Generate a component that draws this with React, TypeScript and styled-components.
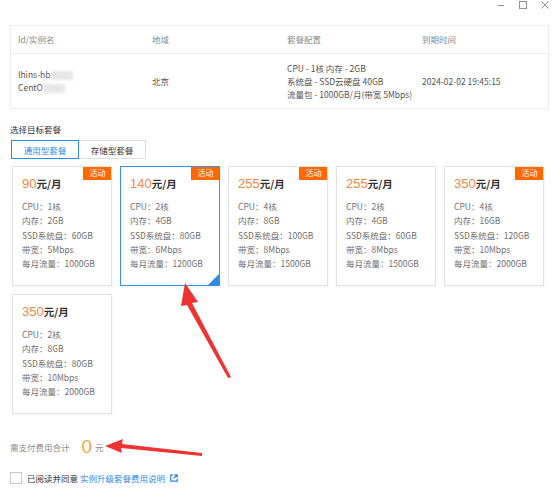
import React from "react";
import styled, { createGlobalStyle } from "styled-components";

const Global = createGlobalStyle`
  html, body { margin: 0; padding: 0; background: #fff; }
  body { font-family: "Noto Sans CJK SC", "Noto Sans", "Liberation Sans", sans-serif; color: #333; }
`;

const Page = styled.div`
  position: relative;
  width: 552px;
  height: 500px;
  overflow: hidden;
  padding: 0 3px 0 10px;
  box-sizing: border-box;
`;

const TopBar = styled.div`
  height: 25px;
  display: flex;
  justify-content: flex-end;
  align-items: flex-start;
  gap: 14px;
  margin-right: 0;
  padding-top: 1px;
  box-sizing: border-box;
`;

const WinIcon = styled.svg`
  display: block;
  stroke: #8f8f8f;
  stroke-width: 1;
  fill: none;
`;

const Table = styled.div`
  border: 1px solid #ececec;
  width: 539px;
  box-sizing: border-box;
`;

const Row = styled.div<{ $h: number; $head?: boolean }>`
  display: grid;
  grid-template-columns: 134px 135px 135px 1fr;
  height: ${(p) => p.$h}px;
  align-items: center;
  padding-left: 7px;
  font-size: 8.5px;
  line-height: 13px;
  color: ${(p) => (p.$head ? "#8a8a8a" : "#555")};
  border-bottom: ${(p) => (p.$head ? "1px solid #ececec" : "none")};
`;

const Blur = styled.span`
  display: inline-block;
  background: #e6e6e6;
  filter: blur(1.5px);
  height: 9px;
  vertical-align: middle;
  width: 22px;
`;

const SectionTitle = styled.div`
  margin-top: 14px;
  font-size: 8.5px;
  line-height: 12px;
  color: #333;
`;

const Tabs = styled.div`
  display: flex;
  margin-top: 5px;
  margin-left: 1px;
`;

const Tab = styled.div<{ $active?: boolean }>`
  width: 68px;
  height: 19px;
  box-sizing: border-box;
  display: flex;
  align-items: center;
  justify-content: center;
  font-size: 8.5px;
  border: 1px solid ${(p) => (p.$active ? "#2f8ae5" : "#dedede")};
  color: ${(p) => (p.$active ? "#2f8ae5" : "#333")};
  margin-left: ${(p) => (p.$active ? "0" : "-1px")};
  position: relative;
  z-index: ${(p) => (p.$active ? 1 : 0)};
`;

const Grid = styled.div`
  display: grid;
  grid-template-columns: repeat(5, 100px);
  gap: 8px;
  margin-top: 7px;
  margin-left: 2px;
`;

const Card = styled.div<{ $selected?: boolean }>`
  position: relative;
  height: 120px;
  box-sizing: border-box;
  border: 1px solid ${(p) => (p.$selected ? "#3d8fe0" : "#e3e3e3")};
  box-shadow: 0 1px 2px rgba(0, 0, 0, 0.06);
  padding: 9px 0 0 9px;
  overflow: hidden;
`;

const Badge = styled.div`
  position: absolute;
  top: -1px;
  right: -1px;
  width: 29px;
  height: 14px;
  background: #ff6a00;
  color: #fff;
  font-size: 8px;
  line-height: 14px;
  text-align: center;
`;

const Corner = styled.div`
  position: absolute;
  right: 0;
  bottom: 0;
  width: 0;
  height: 0;
  border-style: solid;
  border-width: 0 0 11px 11px;
  border-color: transparent transparent #2f8ae5 transparent;
`;

const Price = styled.div`
  display: flex;
  align-items: baseline;
  height: 18px;
`;

const PriceNum = styled.span`
  font-size: 13px;
  color: #f4873d;
  font-family: "Liberation Sans", "Noto Sans CJK SC", sans-serif;
`;

const PriceUnit = styled.span`
  font-size: 10.5px;
  font-weight: 700;
  color: #333;
`;

const Specs = styled.div`
  margin-top: 5px;
  display: flex;
  flex-direction: column;
`;

const Spec = styled.div`
  font-size: 8.5px;
  line-height: 14.3px;
  color: #707070;
  white-space: nowrap;
`;

const Total = styled.div`
  display: flex;
  align-items: center;
  margin-top: 23px;
  height: 20px;
  font-size: 8.5px;
  color: #8a8a8a;
`;

const TotalNum = styled.span`
  font-size: 19px;
  color: #f7a53a;
  margin-left: 12px;
  margin-right: 3px;
  font-family: "Liberation Sans", sans-serif;
`;

const Agree = styled.div`
  display: flex;
  align-items: center;
  margin-top: 15px;
  font-size: 8.5px;
  color: #333;
`;

const Check = styled.span`
  width: 10px;
  height: 10px;
  border: 1px solid #c8c8c8;
  margin-right: 5px;
`;

const Link = styled.span`
  color: #2f8ae5;
  margin-left: 2px;
  display: inline-flex;
  align-items: center;
  gap: 5px;
`;

const Arrows = styled.svg`
  position: absolute;
  left: 0;
  top: 0;
  pointer-events: none;
`;

type Plan = { price: number; cpu: number; mem: number; ssd: number; bw: number; flow: number; badge?: boolean; selected?: boolean };

const plans: Plan[] = [
  { price: 90, cpu: 1, mem: 2, ssd: 60, bw: 5, flow: 1000, badge: true },
  { price: 140, cpu: 2, mem: 4, ssd: 80, bw: 6, flow: 1200, badge: true, selected: true },
  { price: 255, cpu: 4, mem: 8, ssd: 100, bw: 8, flow: 1500, badge: true },
  { price: 255, cpu: 2, mem: 4, ssd: 60, bw: 8, flow: 1500 },
  { price: 350, cpu: 4, mem: 16, ssd: 120, bw: 10, flow: 2000, badge: true },
  { price: 350, cpu: 2, mem: 8, ssd: 80, bw: 10, flow: 2000 },
];

export default function App() {
  return (
    <Page>
      <Global />
      <TopBar>
        <WinIcon width="8" height="8" viewBox="0 0 8 8">
          <path d="M1 4.5H7" />
        </WinIcon>
        <WinIcon width="8" height="8" viewBox="0 0 8 8">
          <rect x="0.5" y="0.5" width="7" height="7" />
        </WinIcon>
        <WinIcon width="8" height="8" viewBox="0 0 8 8">
          <path d="M0.5 0.5L7.5 7.5M7.5 0.5L0.5 7.5" />
        </WinIcon>
      </TopBar>
      <Table>
        <Row $h={27} $head>
          <span>Id/实例名</span>
          <span>地域</span>
          <span>套餐配置</span>
          <span>到期时间</span>
        </Row>
        <Row $h={54}>
          <div>
            <div>lhins-hb<Blur /></div>
            <div>CentO<Blur /></div>
          </div>
          <span>北京</span>
          <div>
            <div>CPU - 1核 内存 - 2GB</div>
            <div>系统盘 - SSD云硬盘 40GB</div>
            <div>流量包 - 1000GB/月(带宽 5Mbps)</div>
          </div>
          <span>2024-02-02 19:45:15</span>
        </Row>
      </Table>
      <SectionTitle>选择目标套餐</SectionTitle>
      <Tabs>
        <Tab $active>通用型套餐</Tab>
        <Tab>存储型套餐</Tab>
      </Tabs>
      <Grid>
        {plans.map((p, i) => (
          <Card key={i} $selected={p.selected}>
            {p.badge && <Badge>活动</Badge>}
            {p.selected && <Corner />}
            <Price>
              <PriceNum>{p.price}</PriceNum>
              <PriceUnit>元/月</PriceUnit>
            </Price>
            <Specs>
              <Spec>CPU：{p.cpu}核</Spec>
              <Spec>内存：{p.mem}GB</Spec>
              <Spec>SSD系统盘：{p.ssd}GB</Spec>
              <Spec>带宽：{p.bw}Mbps</Spec>
              <Spec>每月流量：{p.flow}GB</Spec>
            </Specs>
          </Card>
        ))}
      </Grid>
      <Total>
        需支付费用合计
        <TotalNum>0</TotalNum>
        元
      </Total>
      <Agree>
        <Check />
        已阅读并同意
        <Link>
          实例升级套餐费用说明
          <svg width="8" height="8" viewBox="0 0 10 10">
            <path d="M4 1H1v8h8V6" fill="none" stroke="#2f8ae5" strokeWidth="1.6" />
            <path d="M5.5 1H9v3.5M9 1L4.5 5.5" fill="none" stroke="#2f8ae5" strokeWidth="1.6" />
          </svg>
        </Link>
      </Agree>
      <Arrows width="552" height="500" viewBox="0 0 552 500">
        <polygon points="185,283 198,302 192,303 231,377 228,378 187,305 181,306" fill="#ee3333" />
        <polygon points="105,446 123,439 122,444 202,453 202,456 121,448 122,453" fill="#ee3333" />
      </Arrows>
    </Page>
  );
}
